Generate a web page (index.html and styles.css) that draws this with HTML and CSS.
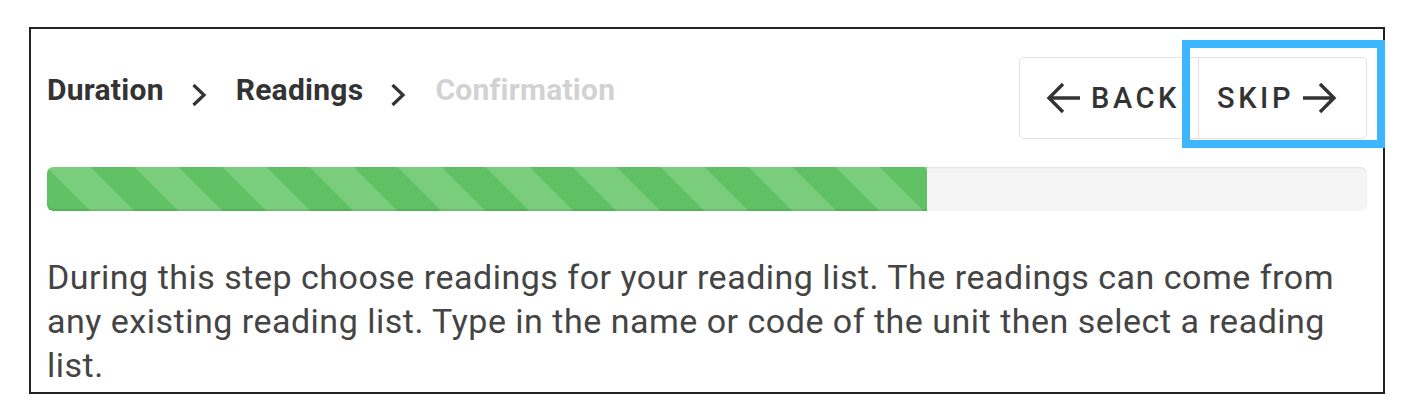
FILE: index.html
```html
<!DOCTYPE html>
<html lang="en">
<head>
<meta charset="utf-8">
<title>Readings step</title>
<link rel="stylesheet" href="styles.css">
</head>
<body>
<div class="frame">
  <div class="header">
    <nav class="crumbs">
      <span class="crumb">Duration</span>
      <svg class="chev" viewBox="0 0 16 26" width="16" height="26"><path d="M2.5 3 L13 13 L2.5 23" /></svg>
      <span class="crumb">Readings</span>
      <svg class="chev" viewBox="0 0 16 26" width="16" height="26"><path d="M2.5 3 L13 13 L2.5 23" /></svg>
      <span class="crumb pending">Confirmation</span>
    </nav>
    <div class="btn-group">
      <button class="btn btn-back" type="button">
        <svg class="arrow" viewBox="0 0 36 34" width="36" height="34"><path d="M34 17 H3 M17 3 L3 17 L17 31" /></svg>
        <span>BACK</span>
      </button>
      <button class="btn btn-skip" type="button">
        <span>SKIP</span>
        <svg class="arrow" viewBox="0 0 36 34" width="36" height="34"><path d="M2 17 H33 M19 3 L33 17 L19 31" /></svg>
      </button>
    </div>
  </div>
  <div class="progress"><div class="progress-bar" style="width:66.7%"></div></div>
  <p class="desc">During this step choose readings for your reading list. The readings can come from any existing reading list. Type in the name or code of the unit then select a reading list.</p>
  <div class="focus-ring"></div>
</div>
</body>
</html>
```
FILE: styles.css
```css
html, body {
  margin: 0;
  padding: 0;
  background: #fff;
}
body {
  font-family: Roboto, "Liberation Sans", sans-serif;
  color: #333;
}
.frame {
  position: relative;
  box-sizing: border-box;
  margin: 27px 0 0 29px;
  width: 1356px;
  height: 367px;
  border: 2px solid #222;
  padding: 28px 16px 0 16px;
}
.header {
  display: flex;
  justify-content: space-between;
  align-items: flex-start;
}
.crumbs {
  display: flex;
  align-items: center;
  margin-top: 15px;
  font-size: 30px;
  line-height: 34px;
  font-weight: 700;
  color: #333;
  letter-spacing: 0.25px;
}
.crumb.pending {
  color: #d2d2d2;
}
.chev {
  margin: 10px 29px 0 27px;
  fill: none;
  stroke: #333;
  stroke-width: 3.2;
}
.btn-group {
  display: flex;
  height: 82px;
  border: 1px solid #e2e2e2;
  border-radius: 5px;
  box-sizing: border-box;
}
.btn {
  display: flex;
  align-items: center;
  background: #fff;
  border: none;
  font-family: Roboto, "Liberation Sans", sans-serif;
  font-size: 29px;
  font-weight: 500;
  letter-spacing: 3.6px;
  color: #333;
  padding: 0;
  border-radius: 5px;
}
.btn-back {
  gap: 9px;
  padding: 0 0 0 26px;
  border-right: 1px solid #e2e2e2;
  border-radius: 5px 0 0 5px;
  width: 179px;
}
.btn-skip {
  gap: 7px;
  padding: 0 0 0 18px;
  border-radius: 0 5px 5px 0;
  width: 167px;
}
.arrow {
  fill: none;
  stroke: #333;
  stroke-width: 3.4;
  flex: none;
}
.progress {
  margin-top: 28px;
  height: 44px;
  background: #f5f5f5;
  border-radius: 6px;
  box-shadow: inset 0 1px 2px rgba(0,0,0,0.08);
  overflow: hidden;
}
.progress-bar {
  height: 100%;
  background-color: #5fc163;
  background-image: repeating-linear-gradient(45deg, #5fc163 0 31px, #7acd7d 31px 62px);
  box-shadow: inset 0 -2px 0 rgba(0,0,0,0.08);
  border-radius: 6px 0 0 6px;
}
.desc {
  margin: 44px 0 0 0;
  font-size: 34px;
  line-height: 44px;
  letter-spacing: 0.5px;
  color: #444;
}
.focus-ring {
  position: absolute;
  left: 1151px;
  top: 11px;
  width: 203px;
  height: 108px;
  box-sizing: border-box;
  border: 8px solid #3bb6ff;
}
```
